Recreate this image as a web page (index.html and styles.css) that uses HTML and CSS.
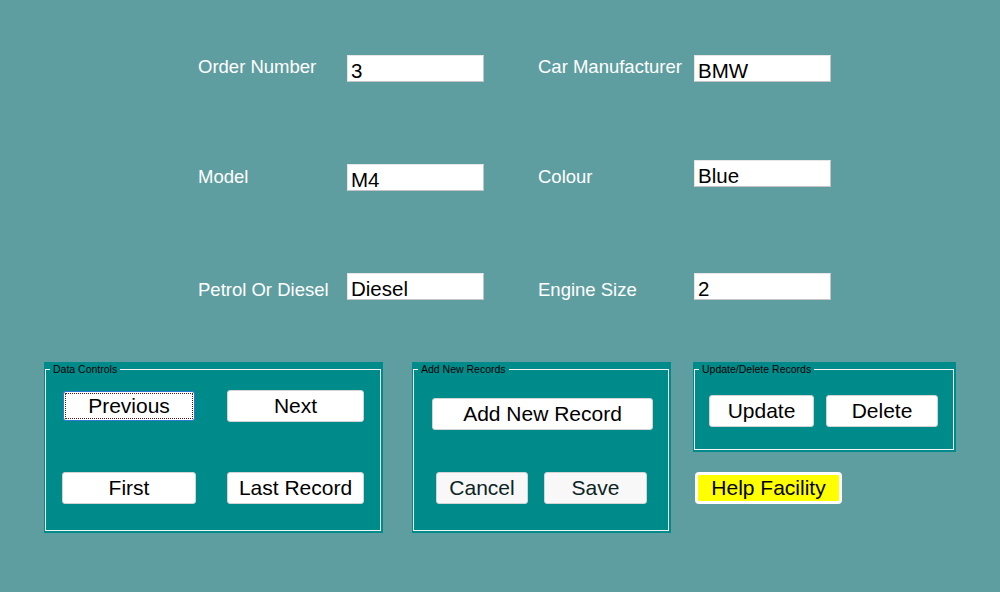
FILE: index.html
```html
<!DOCTYPE html>
<html>
<head>
<meta charset="utf-8">
<title>Car Orders</title>
<link rel="stylesheet" href="styles.css">
</head>
<body>
<div class="page">
  <div class="form">
    <label class="lbl r1">Order Number</label>
    <input class="box" type="text" value="3">
    <label class="lbl r1">Car Manufacturer</label>
    <input class="box" type="text" value="BMW">

    <label class="lbl r2">Model</label>
    <input class="box" type="text" value="M4">
    <label class="lbl r2">Colour</label>
    <input class="box up" type="text" value="Blue">

    <label class="lbl r3">Petrol Or Diesel</label>
    <input class="box" type="text" value="Diesel">
    <label class="lbl r3">Engine Size</label>
    <input class="box" type="text" value="2">
  </div>

  <div class="panels">
    <div class="group g-data">
      <fieldset class="frame">
        <legend class="legend">Data Controls</legend>
        <div class="data-grid">
          <button class="btn btn-prev">Previous</button>
          <button class="btn btn-next">Next</button>
          <button class="btn btn-first">First</button>
          <button class="btn btn-last">Last Record</button>
        </div>
      </fieldset>
    </div>

    <div class="group g-add">
      <fieldset class="frame">
        <legend class="legend">Add New Records</legend>
        <div class="add-row1">
          <button class="btn btn-addnew">Add New Record</button>
        </div>
        <div class="add-row2">
          <button class="btn soft btn-cancel">Cancel</button>
          <button class="btn soft btn-save">Save</button>
        </div>
      </fieldset>
    </div>

    <div class="col3">
      <div class="group g-upd">
        <fieldset class="frame">
          <legend class="legend">Update/Delete Records</legend>
          <div class="upd-row">
            <button class="btn btn-update">Update</button>
            <button class="btn btn-delete">Delete</button>
          </div>
        </fieldset>
      </div>
      <button class="btn help">Help Facility</button>
    </div>
  </div>
</div>
</body>
</html>
```

FILE: styles.css
```css
html, body {
  margin: 0;
  padding: 0;
}
body {
  background: #5f9ea0;
  width: 1000px;
  height: 592px;
  overflow: hidden;
  font-family: "Liberation Sans", Arial, sans-serif;
}
.page {
  width: 1000px;
  height: 592px;
}
.form {
  display: grid;
  grid-template-columns: 149px 191px 156px 137px;
  grid-auto-rows: 27px;
  row-gap: 82px;
  padding: 55px 0 0 198px;
}
.lbl {
  color: #ffffff;
  font-size: 18.5px;
  line-height: 22px;
  white-space: nowrap;
  align-self: start;
}
.lbl.r1 { padding-top: 1px; }
.lbl.r2 { padding-top: 2px; }
.lbl.r3 { padding-top: 6px; }

.box {
  box-sizing: border-box;
  width: 137px;
  height: 27px;
  margin: 0;
  padding: 4px 3px 0 3px;
  background: #ffffff;
  border: 1px solid;
  border-color: #e6e6e6 #c4c4c4 #c4c4c4 #e6e6e6;
  font-family: "Liberation Sans", Arial, sans-serif;
  font-size: 20.5px;
  line-height: 23px;
  color: #000000;
  outline: none;
}
.box.up { margin-top: -4px; }

.panels {
  display: grid;
  grid-template-columns: 368px 281px 263px;
  align-items: start;
  margin-top: 62px;
  padding-left: 44px;
}
.group {
  box-sizing: border-box;
  background: #008b8b;
  padding: 1px 2px 2px 1px;
  display: flex;
  flex-direction: column;
}
.g-data { width: 339px; height: 171px; }
.g-add { width: 259px; height: 171px; }
.g-upd { width: 263px; height: 90px; }

.frame {
  flex: 1;
  margin: 0;
  padding: 0;
  min-width: 0;
  border: 1px solid #f4f4f4;
}
.legend {
  margin-left: 4px;
  padding: 0 3px;
  font-size: 10.5px;
  line-height: 12px;
  color: #000000;
}

.btn {
  box-sizing: border-box;
  height: 32px;
  margin: 0;
  padding: 0;
  background: #ffffff;
  border: 1px solid #d4d4d4;
  border-radius: 3px;
  font-family: "Liberation Sans", Arial, sans-serif;
  font-size: 21px;
  color: #000000;
  display: flex;
  align-items: center;
  justify-content: center;
  white-space: nowrap;
}
.btn.soft {
  background: #f8f8f8;
  color: #0d2424;
}

.data-grid {
  display: grid;
  grid-template-columns: 134px 137px;
  grid-template-rows: 32px 32px;
  column-gap: 31px;
  row-gap: 50px;
  padding: 15px 0 0 16px;
}
.btn-prev {
  width: 132px;
  height: 30px;
  justify-self: center;
  align-self: center;
  border: 1px solid #2a78d8;
  outline: 1px dotted #5a1010;
  outline-offset: -3px;
}
.btn-first { width: 134px; }
.btn-next, .btn-last { width: 137px; }

.add-row1 {
  padding: 23px 0 0 18px;
}
.btn-addnew { width: 221px; }
.add-row2 {
  display: flex;
  gap: 16px;
  padding: 42px 0 0 22px;
}
.btn-cancel { width: 92px; }
.btn-save { width: 103px; }

.upd-row {
  display: flex;
  gap: 12px;
  padding: 20px 0 0 14px;
}
.btn-update { width: 105px; }
.btn-delete { width: 112px; }

.col3 {
  display: flex;
  flex-direction: column;
  align-items: flex-start;
}
.help {
  width: 147px;
  margin: 20px 0 0 2px;
  background: #ffff00;
  border: 3px solid #ffffff;
  border-radius: 4px;
}
```
